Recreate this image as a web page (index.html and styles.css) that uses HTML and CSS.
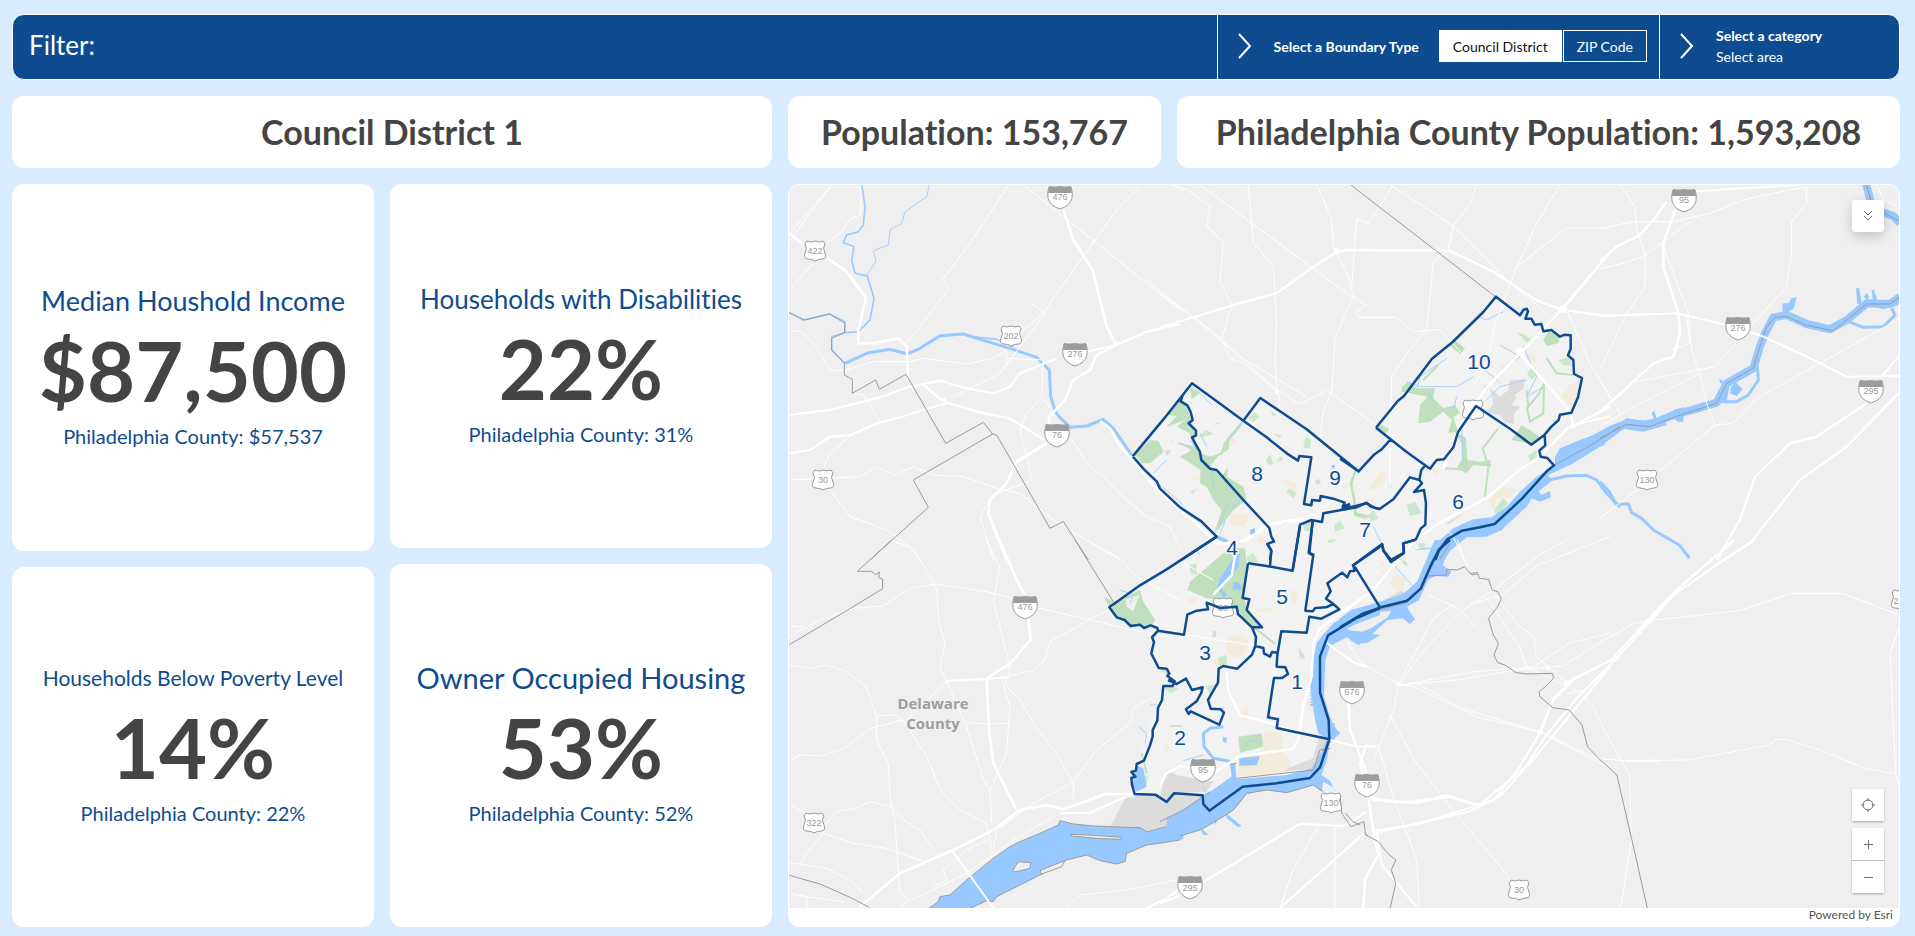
FILE: index.html
```html
<!DOCTYPE html>
<html lang="en">
<head>
<meta charset="utf-8">
<title>Philadelphia District Dashboard</title>
<link rel="stylesheet" href="styles.css">
</head>
<body>
<div class="dashboard">
  <header class="filter-bar">
    <h1 class="filter-title">Filter:</h1>
    <div class="selector selector-boundary">
      <button class="chevron" type="button" aria-label="Expand boundary type"><svg viewBox="0 0 14 26"><path d="M1 1 12 13 1 25"/></svg></button>
      <span class="selector-label" id="boundary-label">Select a Boundary Type</span>
      <div class="segmented" role="group" aria-labelledby="boundary-label">
        <button class="segment segment-active" type="button" aria-pressed="true">Council District</button>
        <button class="segment" type="button" aria-pressed="false">ZIP Code</button>
      </div>
    </div>
    <div class="selector selector-category">
      <button class="chevron" type="button" aria-label="Expand category"><svg viewBox="0 0 14 26"><path d="M1 1 12 13 1 25"/></svg></button>
      <button class="category" type="button"><span class="category-name">Select a category</span><span>Select area</span></button>
    </div>
  </header>

  <main class="content">
    <section class="left">
      <h2 class="card headline">Council District 1</h2>
      <div class="metrics">
        <div class="metric-column">
          <article class="card metric metric-tall">
            <h3 class="metric-title title-medium">Median Houshold Income</h3>
            <p class="metric-value">$87,500</p>
            <p class="metric-note">Philadelphia County: $57,537</p>
          </article>
          <article class="card metric metric-raised">
            <h3 class="metric-title title-small">Households Below Poverty Level</h3>
            <p class="metric-value">14%</p>
            <p class="metric-note">Philadelphia County: 22%</p>
          </article>
        </div>
        <div class="metric-column">
          <article class="card metric">
            <h3 class="metric-title title-regular">Households with Disabilities</h3>
            <p class="metric-value">22%</p>
            <p class="metric-note">Philadelphia County: 31%</p>
          </article>
          <article class="card metric">
            <h3 class="metric-title title-large">Owner Occupied Housing</h3>
            <p class="metric-value">53%</p>
            <p class="metric-note">Philadelphia County: 52%</p>
          </article>
        </div>
      </div>
    </section>

    <section class="right">
      <div class="populations">
        <h2 class="card headline">Population: 153,767</h2>
        <h2 class="card headline">Philadelphia County Population: 1,593,208</h2>
      </div>
      <div class="card map-card">
        <div class="map">
          <svg class="map-canvas" viewBox="789 185 1110 723" preserveAspectRatio="xMidYMid slice" role="img" aria-label="Map of Philadelphia council districts">
            <defs>
              <g id="interstate">
                <path class="shield" d="M-11-10Q-13-5-12 1Q-10 9 0 12Q10 9 12 1Q13-5 11-10Q5-9 0-10Q-5-9-11-10Z"/>
                <path class="shield-cap" d="M-11-11Q-5-10 0-11Q5-10 11-11L12-4H-12Z"/>
              </g>
              <path id="ushwy" class="shield" d="M-8-10Q-4-8 0-10Q4-8 8-10L10-7Q7-3 10 2Q12 8 7 8Q3 8 0 10Q-3 8-7 8Q-12 8-10 2Q-7-3-10-7Z"/>
            </defs>
            <rect class="land" x="789" y="185" width="1110" height="723"/>

            <!-- City interior -->
            <g transform="translate(1100 280) scale(.33333)">
              <path class="city" d="M98 529 276 310 430 422 481 354 778 576 870 480 828 443 894 362 1188 50 1260 106 1330 154 1412 164 1422 282 1446 294 1414 398 1334 464 1362 556 1184 732 1042 778 960 900 840 984 700 1050 660 1130 660 1240 688 1378 640 1494 430 1520 328 1592 310 1546 104 1542 94 1490 190 1218 154 1120 174 1052 28 982 350 770Z"/>
            </g>

            <!-- Industrial and airport areas -->
            <g transform="translate(1340 280) scale(.33333)">
              <path class="gray" d="M450 325 480 350 505 330 510 300 555 298 550 325 525 345 530 355 512 375 540 380 522 400 522 432 495 428 480 405 440 400 460 370Z"/>
              <path class="beige" d="M665 350 690 315 720 298 712 345 695 378ZM445 660 490 620 530 630 510 650 470 655 460 690ZM85 625 120 575 140 580 125 610 100 630ZM560 215 590 230 585 250 562 238ZM480 250 498 255 488 268ZM80 665 95 650 108 668ZM270 560 300 575 285 585ZM5 620 25 612 18 628Z"/>
            </g>
            <g transform="translate(1100 520) scale(.33333)">
              <path class="gray" d="M200 750 230 765 340 785 320 815 230 820 200 846 180 830ZM40 905 110 825 165 826 200 846 225 822 308 828 300 850 190 895 90 920 35 920ZM550 750 640 715 660 640 690 655 640 745 550 755ZM210 615H246V622H210Z"/>
              <path class="beige" d="M378 355 420 343 445 360 435 400 410 415 380 400ZM415 715 480 700 495 632 548 640 545 690 575 730 550 760 415 770ZM570 210 590 215 592 250 572 250ZM470 268 515 262 515 272 475 278ZM620 535 645 545 640 585 622 565ZM425 565 445 560 442 600 425 595ZM192 670 206 672 204 700 194 690ZM340 420 380 415 380 435 350 440ZM265 235H285V248H265ZM385 0 448-10 430 20 400 15ZM470 55 490 50 495 70 478 70Z"/>
            </g>
            <g transform="translate(1340 540) scale(.36671 .33333)">
              <path class="beige" d="M135 130 155 98 178 115 172 152 150 150ZM108 60 128 72 115 80ZM110 88 126 98 120 106Z"/>
              <path class="gray" d="M120 180 165 152 180 160 150 185Z"/>
            </g>
            <g transform="translate(780 540) scale(.33333)">
              <path class="gray" d="M990 862 1035 775 1120 768 1160 788 1200 765V850L1100 872Z"/>
            </g>

            <!-- Parks -->
            <g transform="translate(1100 280) scale(.33333)">
              <path class="park" d="M205 405 240 360 258 378 275 420 275 445 288 460 282 490 300 520 330 530 360 520 330 560 355 572 365 590 385 560 380 590 430 620 440 660 400 690 370 730 350 750 340 770 365 690 340 660 320 620 300 610 302 570 280 555 240 530 275 510 230 485 280 500 270 460 230 440 255 420 200 440 230 408ZM105 525 150 480 175 482 190 515 150 550 125 550ZM270 320 300 340 275 358ZM365 520 372 490 395 460 420 430 430 430 390 480 385 510Z"/>
              <path class="park-light" d="M290 470 320 450 340 462 310 472ZM192 512 215 510 202 528ZM445 415 462 396 478 410 462 426ZM510 395 530 402 520 410ZM520 460 548 468 535 474ZM610 490 620 470 634 480 630 505 612 505ZM498 540 510 522 520 552 505 555ZM528 545 545 528 548 542ZM558 635 575 620 590 640 580 655ZM610 725 638 725 632 755 612 752ZM270 636 292 625 278 642ZM702 735 720 722 735 745 705 755ZM680 780 710 778 690 790Z"/>
              <path class="park-line" d="M770 560 755 610 762 650 768 700 810 710M330 535 365 520 375 490 425 430"/>
              <path class="beige" d="M250 345 270 335 265 350ZM258 362 285 366 275 374ZM208 470 225 485 215 490ZM385 480 398 466 408 485 392 498ZM275 590 300 592 285 604ZM542 600 560 598 590 610 590 640 560 618ZM395 700 445 702 430 730 390 720ZM750 625 772 612 765 636Z"/>
              <path class="gray" d="M645 600 660 598 662 612 648 614Z"/>
            </g>
            <g transform="translate(1340 280) scale(.33333)">
              <path class="park" d="M185 320 205 305 230 325 285 325 280 355 310 385 345 375 360 400 340 410 355 460 378 475 382 540 420 545 450 540 455 560 400 555 380 580 350 565 365 540 365 490 345 455 325 460 335 420 310 395 270 425 235 430 240 375 262 350 210 340 185 335ZM610 180 625 155 660 165 655 190 620 198ZM110 443 118 432 148 448 135 462ZM325 195 340 178 375 205 362 222ZM515 480 545 435 600 470 575 492Z"/>
              <path class="park-light" d="M530 155 555 165 575 180 560 188ZM560 280 580 258 590 285 575 300ZM655 240 690 230 695 258 668 255ZM565 525 590 510 590 530 570 545ZM462 690 490 655 505 670 470 705ZM200 675 225 665 245 700 210 708ZM85 705 100 690 115 715 95 725ZM235 790 258 790 250 805ZM320 728 370 700 365 706 322 735ZM430 320 450 310 440 328ZM145 610 158 618 148 630Z"/>
              <path class="park-line" d="M250 300 295 255M560 330 565 380 598 340 612 310 610 400 570 425 560 380M435 650 445 560 428 505 475 445M310 565 365 568M50 560 32 610 42 660 45 705 80 715M620 235 650 280 700 285"/>
              <path class="stream" d="M230 330 240 290 320 235M200 305 240 320 350 320 400 290M340 180 370 210M480 195 540 230 500 260M550 200 590 290 560 350 612 320M415 110 440 120 490 95M440 360 480 320 560 300M350 350 340 390M270 340 275 370M430 270 460 290 480 310M365 440 370 550M100 740 125 790M240 805 275 805"/>
            </g>
            <g transform="translate(1100 520) scale(.33333)">
              <path class="park" d="M262 210 270 185 370 100 400 85 435 85 440 130 428 220 440 260 456 290 486 320 456 322 412 270 350 240 320 235ZM12 230 30 240 40 245 120 210 130 245 165 300 155 318 92 318 50 292 28 262ZM415 650 485 640 490 680 420 698Z"/>
              <path class="park-light" d="M440 110 460 100 475 125 445 130ZM190 500 218 495 235 508 210 520ZM338 332H348V352H338ZM354 412 380 405 380 432 358 440ZM318 500 350 492 330 525ZM175 445 210 455 200 465ZM595 380 600 415 618 415M268 135 290 130 290 165 272 160ZM130 770 145 765 138 800ZM605 12 640 6 632 34Z"/>
              <path class="park-line" d="M460 320 525 372M125 700 140 760"/>
              <path class="land-fill" d="M75 238 118 225 100 275 80 260Z"/>
              <path class="water" d="M395 120 420 98 415 140 385 180 362 205 382 225 370 232 352 205 355 185ZM400 185 420 190 425 210 398 208ZM370 650 382 655 378 670 368 662ZM418 715 480 708 470 735 418 738ZM108 735 130 745 140 800 110 815 98 795ZM450 30 465 25 462 42 450 42ZM350 45 385 60 378 72 348 55Z"/>
              <path class="water-line" d="M370 620 330 625 310 640 312 680 340 715 395 725"/>
              <path class="stream" d="M250 722 310 705M60 210 100 225 90 250M115 620 140 640 135 670M150 555H175M365 560 372 570M310 800 320 830M290 90 300 105M360 40 375 5M430 690 450 660 480 670"/>
            </g>
            <g transform="translate(1340 540) scale(.36671 .33333)">
              <path class="park-light" d="M212 12 228 8 232 22 215 24ZM168 58 182 66 184 80 172 72Z"/>
              <path class="stream" d="M135 60 200 140M205 30 250 25"/>
            </g>
            <g transform="translate(1100 280) scale(.33333)">
              <path class="stream" d="M275 315 335 375M330 575 345 630 385 670 355 750M430 420 380 490M175 610 250 675M160 580 200 540M270 480 310 530M235 490 275 500M300 460 320 500M355 430H350M395 690 440 640"/>
              <path class="water" d="M450 752 462 745 466 760 455 768ZM695 555H705V565H695Z"/>
            </g>

            <!-- Rivers -->
            <g transform="translate(1340 280) scale(.33333)">
              <path class="water" d="M840 425 800 442 760 465 720 480 660 505 645 530 645 555 590 590 540 635 500 680 455 712 400 718 340 745 300 780 265 840H312L330 812 380 772 440 770 485 750 500 735 560 680 575 655 600 665 632 652 630 632 605 645 595 635 635 602 625 585 700 550 780 500 840 455Z"/>
              <path class="creek" d="M610 604 680 588 740 586 770 600 800 640 840 682"/>
            </g>
            <g transform="translate(1600 180) scale(.33333)">
              <path class="river" d="M0 770 80 730 150 735 220 705 270 692 350 668 380 610 460 565 480 500 495 460 520 412 560 405 620 432 690 448 740 420 800 370 870 372 900 350"/>
              <path class="water" d="M548 395V370H565L575 355 590 352 582 385 560 398ZM392 625 405 605 428 628 410 648 390 640ZM220 690 250 682 250 725H235L220 715ZM155 700 163 692 170 715H160ZM357 600 365 598 375 620 365 615ZM0 770 80 715 130 722 190 710 200 735 130 755 60 745 15 770V795L0 800ZM355 670 365 620 380 605 390 615 380 660 400 665ZM768 325 778 325 785 372 772 372ZM792 350 800 340 808 350 800 362ZM815 330H822L832 360 870 360 895 345V375L850 388 820 380Z"/>
              <path class="creek" d="M372 665 410 665 445 645 475 600 472 560M745 425 790 442 850 440 885 405 875 385M0 905 28 935 48 972 85 972 95 998 125 1015 160 1050 238 1095 268 1134"/>
              <path class="river" d="M798 10 812 65M850 98 880 108 900 130"/>
              <path class="county" d="M0 775 80 733 150 740 220 712 350 670 380 610 460 565 480 500 500 440 525 412 560 410 620 436 700 452 800 372 870 372 900 350M800 15 812 60M850 98 900 125"/>
            </g>
            <g transform="translate(1340 540) scale(.36671 .33333)">
              <path class="water" d="M258 0 235 60 210 125 175 160 110 185 30 210 0 235V285L25 290 30 302 50 315 80 298 90 280 130 240 170 235 190 252 205 238 190 215 183 200 215 180 240 120 260 108 295 110 304 95 280 75 285 60 316 0Z"/>
              <path class="land-fill" d="M15 270 60 240 110 215 140 212 130 232 85 265 60 275Z"/>
            </g>
            <g transform="translate(780 540) scale(.33333)">
              <path class="water" d="M440 1110 475 1085 480 1070 510 1065 560 1020 640 955 690 920 720 905 780 880 835 855 840 842 880 852 940 858 1040 862 1080 863 1100 875 1160 860 1210 832V898L1150 908 1100 915 1040 940 1035 965 1010 972 960 962 920 945 860 960 790 1000 710 1040 650 1070 640 1085 620 1082 560 1110Z"/>
              <path class="coast-line" d="M440 1110 475 1085 480 1070 510 1065 560 1020 640 955 690 920 720 905 780 880 835 855 840 842 880 852 940 858 1040 862 1080 863 1100 875 1160 860 1200 838M1200 900 1150 908 1100 915 1040 940 1035 965 1010 972 960 962 920 945 860 960 790 1000 710 1040 650 1070 640 1085 620 1082 560 1110"/>
              <path class="land-fill coast" d="M698 992 715 965 752 968 750 985 705 996ZM872 883 940 886 1025 892V898L950 895 875 888ZM780 992 820 975 855 962 845 980 785 1002Z"/>
            </g>
            <g transform="translate(1100 520) scale(.33333)">
              <path class="water" d="M840 245 770 268 700 310 668 345 650 370 640 420 632 500 645 600 655 640 680 655 668 690 635 745 560 765 410 778 405 730 390 730 395 770 330 815 250 870 200 895V965L250 945 300 930 345 905 380 885 410 860 440 822 500 810 560 818 640 795 665 815 670 785 700 802 690 782 665 765 680 720 690 670 720 640 700 615 690 590 672 530 676 420 690 378 740 352 770 370 800 370 840 345 760 335 735 325 840 285Z"/>
              <path class="water" d="M340 890 355 895 345 915ZM378 880 425 918 415 922 380 895ZM295 915 325 945 310 945Z"/>
              <path class="pier" d="M638 400V440M636 470V560M700 610V650"/>
              <path class="coast-line" d="M390 735 410 730M410 775 640 750 660 690 690 685M240 948 300 930 345 905 400 870 440 820 500 810 560 818 640 795 670 815M180 905 250 870 330 815"/>
            </g>
            <g transform="translate(780 180) scale(.33333)">
              <path class="schuylkill" d="M195 550 260 520 330 508 382 522 420 505 480 467 550 462 640 490 700 508 770 532 808 570 812 650 828 700 870 742 920 738 970 718 1000 745 1055 825"/>
              <path class="brook" d="M245 12 255 80 250 135 235 155 200 165 190 188 222 200 215 240 225 280 262 288 282 355 270 420 235 455 195 458 155 470 155 510 195 550M28 398 70 420 148 402 195 425 195 458"/>
              <path class="stream" d="M448 15 440 50 375 95 365 130 330 150 325 195 280 212 288 245 260 285"/>
              <path class="brook" d="M580 470 650 478 700 500"/>
            </g>

            <!-- Local roads -->
            <g class="roads" transform="translate(780 180) scale(.33333)">
              <path d="M155 15 28 160M0 220 155 15M242 15 242 105 210 118 180 160 140 190M28 330 100 250M685 15 610 130 570 190 488 298 508 325 380 490M730 15 945 185 1200 390M1080 20 1010 90 910 230 830 340 790 400 730 450M755 372 795 400 660 580 520 650M28 452 65 455 110 500 150 572 200 570 280 545 390 545 430 535 560 552 640 535 680 510 680 550 660 580M680 535 790 540 785 650 740 700 720 750 745 850 755 900 640 945M790 655 830 710M870 770 920 850 970 890 1040 960 1100 1010 1170 1040 1200 1100M28 900 240 890 290 862 345 885 400 860 460 885 550 890 650 925 720 940 820 1020 1020 1140M130 865 150 820 210 768 300 730M150 930 210 1010 320 1050 390 1100 420 1140M220 640 250 645 300 725M645 935 600 1010 640 1140"/>
              <path class="road-mid" d="M28 705 150 690 290 655 390 620 480 602 560 625 640 640 690 620 720 580 830 535M28 820 90 810 150 770 210 765 290 730 350 715 430 690 500 670M425 610 490 665 610 700 690 715 790 778"/>
              <path class="road-major" d="M28 160 72 195M142 235 200 275 258 355 235 450 235 490 280 490 355 475 380 500 385 600M850 90 880 180 938 270 980 440 1010 495M1010 495 950 525 930 570 880 600 855 660 808 710 805 740M800 790 710 845 680 910 630 960 625 1000 680 1140"/>
              <path class="road-mid" d="M920 515 1010 495 1100 455 1200 432"/>
            </g>
            <g class="roads" transform="translate(780 540) scale(.33333)">
              <path d="M330 0 400 25 435 85 470 150 475 240 495 310 480 385 500 425 380 540M28 290 110 245 220 205 310 198 390 145 465 132 620 155 700 175M28 260H70M28 375 90 385 140 375 200 395 260 440 290 530 290 600 325 670 330 770 345 850 360 1060 390 1082M28 662 60 645 120 648 190 628 270 565 370 540 440 650 480 750 540 810 620 850 635 930M290 528 350 525 370 545M500 425 560 560 610 720 630 750 635 850M620 0 660 85 640 180 685 360 690 400 672 440 690 500 680 640 630 750M680 440 720 480 770 565 830 640 880 730 880 780M1130 465 1060 505 1050 550 950 630 880 725 760 790 650 870 640 930M780 205 1080 275 1200 295M1000 200 810 305 795 360 760 390 680 410M560 548 620 552 690 550M28 795 80 820 130 880 220 910 320 925 440 968M130 880 80 940 60 975M130 860 170 815 230 805 268 785 330 798 370 840 420 870 460 930M28 968 140 985 210 1020 250 1060M28 1060 80 1070 190 1085M80 1070V1104M360 1100 390 1080 470 1045 560 1000 640 945 700 900 820 830M460 1040 500 1020 490 990 560 930 620 900M920 0 1020 55 1070 110 1200 180M860 1104 900 1065 1050 1048 1190 1020"/>
              <path class="road-mid" d="M500 422 610 418 680 412M840 820 930 818 1040 770M1100 1104 1160 1075 1200 1045M515 930 640 1104"/>
              <path class="road-major" d="M658 0 710 120 735 165M745 235 752 300 690 370 620 415 628 580 640 670 680 750 710 810M240 1100 360 1000 520 930 640 870 720 810 800 795 850 808 975 762 1060 762"/>
            </g>
            <g class="roads" transform="translate(1160 180) scale(.33333 .48214)">
              <path d="M35 10 80 20 150 55 140 95 190 130 180 210 215 260 185 330 210 370 250 380 355 440 360 480M120 10 560 235 620 260 585 275 600 285 710 285 760 315M265 10 280 130 340 180 350 300 345 370 350 440M470 10 515 80 520 140 560 190 580 240 525 330 515 440 490 480 480 530M0 235 150 310 340 430 420 465 500 435 560 465 650 510M700 10 625 90 590 80 575 220M690 10 880 95 1060 220 1150 270M950 10 930 50 880 95 865 145 820 170 800 310 740 360 695 410 690 540 690 640M1200 10 1130 90 1070 180 1000 310 985 370 940 430M1350 100 1220 100 1070 180M760 315 840 310 1000 430M1220 270 1290 380 1350 450M330 740 380 715 440 705M1350 740 1130 800 1030 860 930 880M1350 940 1230 960 1120 1010 940 1020 720 1048 760 1050 880 1090 1140 1145 1350 1220M560 955 600 1000 715 1045 820 910 880 880M715 1048 700 1100 660 1170 640 1200M690 1110 760 1200 870 1300 980 1390 1075 1470M655 1175 700 1280 770 1410 778 1510M0 935 280 965M160 830 60 790M525 1340V1510M475 1340 400 1430 360 1510M950 930 900 890 800 860M985 870 1080 970 1100 1010 1220 1050M810 690 880 740 920 800 940 830"/>
              <path class="road-mid" d="M0 305 100 285 240 255 350 235 460 180 530 150 560 145 870 147 1000 190 1130 250 1210 270 1350 282M500 960 580 1000 620 1010M200 1020 205 1060 240 1110 350 1130 500 1160 590 1175 650 1175M0 1500 40 1490 120 1460 290 1390 420 1335 550 1340 620 1310M640 1350 780 1335 960 1295 1110 1210 1350 1010M360 1510 620 1350M1350 490 1230 510 1130 580 1080 600 980 660 840 710 760 750M650 1350 665 1420 770 1508"/>
              <path class="road-major" d="M1350 150 1210 265 1080 360 980 430 900 510 850 600M1080 360 1230 480 1240 510M1350 470 1240 510M620 1170 600 1210 625 1280 640 1350 655 1400 615 1450 610 1510M565 1085 570 1140 620 1230M635 1285 740 1290 870 1280 960 1297M760 750 640 850 480 930 460 960 455 1030 430 1090 415 1160 400 1180 240 1195 160 1230 60 1215 20 1230 0 1255M225 780 215 820 160 860"/>
            </g>
            <g class="roads" transform="translate(1100 280) scale(.33333)">
              <path class="road-major" d="M0 424 30 445 60 500 95 535 150 605 200 655 300 740 350 790 400 790 440 780 500 735 560 722 610 720"/>
              <path d="M430 775 560 725 660 700 700 660M140 0 300 130 420 230 620 350"/>
            </g>
            <g class="roads" transform="translate(1600 180) scale(.33333)">
              <path d="M60 15 105 80 110 150 135 220 135 320 75 410 0 570M0 145 100 125 220 125 330 100 430 60 520 40 620 20 620 70 575 125 575 220 560 320 460 430 345 560 110 605 50 650M0 265 70 250 130 230 270 125M190 200 265 400 275 510 300 580 320 670 345 735 400 730 470 655 660 550 900 415M0 600 60 700M0 740 100 680 300 580M345 735 130 915 0 1015M240 400 260 410 270 490 215 510M830 15 850 60 900 80"/>
              <path class="road-mid" d="M270 35 430 25 600 15M0 408 230 400 400 440 490 470 620 530 740 590 900 588M350 1140 420 1020 465 890 570 790 650 770 800 670M370 1140 450 1090 600 900 740 800 900 635M840 595 900 525"/>
              <path class="road-major" d="M0 245 50 200 120 165 160 120 200 65M225 90 190 190 190 260 235 400 240 460 220 530 160 550 40 660 0 695"/>
            </g>
            <g class="roads" transform="translate(1340 540) scale(.36671 .33333)">
              <path d="M320 0 340 60 410 145 440 190 490 260 530 290 535 350 620 430 690 500 720 570 790 705 795 900 765 1104M620 0 550 40 430 140 330 215 230 330 160 435 320 420 480 390 610 378 690 320 800 250 860 240 1090 212 1230 160 1370 160 1525 225M1525 260 1500 340 1515 700 1525 740M210 430 370 530 545 575 700 655 780 662 950 660 1170 615 1190 598 1220 600 1310 630 1430 685 1515 702M620 460 670 450"/>
              <path class="road-mid" d="M1130 0 1020 80 910 165 850 240 750 360 650 470 560 590 500 690 440 765 390 795 350 815 90 880M780 662H870M545 580 490 680 420 780 370 795 290 765 210 790 130 785 80 770"/>
              <path class="road-major" d="M1075 0 960 110 900 170 840 240 740 360 640 415 580 480 545 580"/>
            </g>
            <g class="interchanges">
              <circle cx="1116" cy="344" r="3"/><circle cx="944" cy="400" r="2"/><circle cx="1520" cy="352" r="4"/><circle cx="1563" cy="309" r="4"/><circle cx="1573" cy="426" r="3"/><circle cx="1567" cy="683" r="3"/><circle cx="1540" cy="732" r="3"/><circle cx="1398" cy="684" r="2"/><circle cx="1649" cy="621" r="3"/><circle cx="1548" cy="668" r="2"/><circle cx="1277" cy="392" r="2"/><circle cx="1336" cy="250" r="2"/>
            </g>

            <!-- County lines -->
            <g transform="translate(780 180) scale(.33333)">
              <path class="county" d="M28 398 75 420 148 402 195 430 193 458 155 475 155 510 193 550V585L217 598V640L287 600 298 628 378 583 497 790 610 727 638 762 400 900 445 982 270 1140M638 762 650 765 810 1045 850 1025 925 1140"/>
            </g>
            <g transform="translate(780 540) scale(.33333)">
              <path class="county" d="M335 0 232 94 275 94 287 104 298 96 296 112 308 118V146L200 212 28 314M885 0 1000 185M28 1006 120 1032 210 1072 268 1102"/>
            </g>
            <g transform="translate(1160 180) scale(.33333 .48214)">
              <path class="county" d="M572 10 1008 243"/>
            </g>
            <g transform="translate(1340 540) scale(.36671 .33333)">
              <path class="county" d="M240 108 290 105 292 88 320 90 340 80 355 100 375 98 380 115 405 118 415 150 430 155 440 175 430 200 405 235 418 285 432 310 420 345 430 368 450 375 480 398 510 402 580 400 582 415 560 440 543 455 545 470 580 503 625 510 660 555 675 620 705 655 755 705 795 895 838 1104M0 765 5 820 30 860 65 845 70 885 105 905 130 940 152 960 140 990 152 1030 137 1104M15 820 35 845 55 855M350 95 360 105 375 102M66 878 76 888"/>
              <path class="county" d="M0 262 60 225 111 208 183 187 222 148 250 80 275 28 300 0"/>
            </g>
            <g transform="translate(1340 280) scale(.33333)">
              <path class="county" d="M840 440 742 502 642 556M300 838 330 790"/>
            </g>

            <use href="#interstate" x="1060" y="197"/><text class="shield-text" x="1060" y="200">476</text>
            <use href="#interstate" x="1075" y="354"/><text class="shield-text" x="1075" y="357">276</text>
            <use href="#interstate" x="1057" y="435"/><text class="shield-text" x="1057" y="438">76</text>
            <use href="#interstate" x="1684" y="200"/><text class="shield-text" x="1684" y="203">95</text>
            <use href="#interstate" x="1738" y="328"/><text class="shield-text" x="1738" y="331">276</text>
            <use href="#interstate" x="1871" y="391"/><text class="shield-text" x="1871" y="394">295</text>
            <use href="#interstate" x="1025" y="607"/><text class="shield-text" x="1025" y="610">476</text>
            <use href="#interstate" x="1352" y="692"/><text class="shield-text" x="1352" y="695">676</text>
            <use href="#interstate" x="1203" y="770"/><text class="shield-text" x="1203" y="773">95</text>
            <use href="#interstate" x="1367" y="785"/><text class="shield-text" x="1367" y="788">76</text>
            <use href="#interstate" x="1190" y="887"/><text class="shield-text" x="1190" y="891">295</text>
            <use href="#ushwy" x="815" y="251"/><text class="shield-text" x="815" y="254">422</text>
            <use href="#ushwy" x="1011" y="336"/><text class="shield-text" x="1011" y="339">202</text>
            <use href="#ushwy" x="823" y="480"/><text class="shield-text" x="823" y="483">30</text>
            <use href="#ushwy" x="1647" y="480"/><text class="shield-text" x="1647" y="483">130</text>
            <use href="#ushwy" x="814" y="823"/><text class="shield-text" x="814" y="826">322</text>
            <use href="#ushwy" x="1331" y="803"/><text class="shield-text" x="1331" y="806">130</text>
            <use href="#ushwy" x="1519" y="890"/><text class="shield-text" x="1519" y="893">30</text>
            <use href="#ushwy" x="1902" y="600"/><text class="shield-text" x="1896" y="604">2</text>
            <use href="#ushwy" x="1473" y="410"/>
            <use href="#ushwy" x="1223" y="608"/><text class="shield-text" x="1223" y="611">30</text>
            <text class="county-name" x="933" y="709">Delaware</text>
            <text class="county-name" x="933" y="729">County</text>

            <!-- Council district boundaries -->
            <g class="districts" transform="translate(1100 280) scale(.33333)">
              <path d="M98 529 192 416 276 310 340 356 430 422 481 354 620 448 778 576M248 346 242 364 262 376 272 396 278 420 266 430 288 452 288 466 276 472 300 516 304 540 330 566 350 570 430 660 508 744 514 770 522 784 502 792 514 812 510 840M430 422 500 472 560 520 594 542 598 528 634 532 612 672 634 676 636 660 660 662 662 648 700 656 734 668 728 680 770 682 800 668 812 680 840 688M728 680 750 672M98 529 132 568 170 604 180 626 240 682 304 724 350 770 244 840M578 870 600 734 634 720 666 726 670 700 770 682M638 722 628 820 640 826"/>
            </g>
            <g class="districts" transform="translate(1340 280) scale(.33333)">
              <path d="M0 536 56 574 100 526 125 508 150 480M108 443 174 362 192 348 276 236 338 186 430 96 468 50 540 106 550 90 560 86 564 94 556 116 574 116 584 134 604 132 610 154 634 150 660 170 674 164 692 166 692 206 684 226 700 240 702 282 726 294 714 352 694 398 660 404 656 420 634 440 614 464 574 494 510 446 408 378 354 456 340 502 312 538 290 540 270 566 200 516 108 443M614 464 616 496 598 512 602 530 622 534 642 556 622 572 546 656 464 732 420 742 366 752 322 778 296 814 286 840M256 556 244 570 238 600 210 592 160 658 120 686 106 684 80 670 0 690M238 600 246 610 222 636 252 630 258 670 256 734 242 746 228 778 190 790 192 818 152 840M62 840 126 794 130 812 152 838"/>
            </g>
            <g class="districts" transform="translate(1100 520) scale(.33333)">
              <path d="M502 72 514 92 510 138M350 50 200 148 120 196 28 262 50 292 74 300 92 318 120 314 132 324 152 316 172 324 174 332 252 344 262 284 290 272 324 268 320 248 360 264 410 260 414 282 456 322 468 352 466 378 456 404 412 446 370 438 356 446 354 488 324 540 332 566 362 568 372 578 358 614 272 574 266 582 258 568 290 544 304 518 308 502 276 510 258 476 230 492 204 480M174 332 156 352 162 366 154 400 176 444 200 446 208 460 202 468 224 484 218 498 190 498 186 540 174 564 172 602 158 630 158 650 150 676 132 722 110 732 108 752 94 756 106 770 94 774 96 794 104 822 166 824 200 846 222 820 308 826 310 852 328 872 428 800 530 790 630 774 660 742 688 658 686 600 660 518 660 410 684 346 770 294 840 264M688 658 530 624 534 598 504 592 522 474 546 474 564 462 556 442 530 440 532 404 544 334 620 338 628 290 664 296 718 268 700 252 678 262 646 264 638 274 616 272 640 104 626 98 638 4M444 130 500 138 578 152 600 20M444 130 428 234 448 238 440 270 486 322 456 322M466 378 490 384 492 400 510 410 516 396 532 398M700 252 678 236 692 214 682 190 726 158 742 172 750 154 764 152 760 136 840 80M764 140 840 262"/>
            </g>
            <g class="districts" transform="translate(1340 540) scale(.36671 .33333)">
              <path d="M0 262 60 222 111 202 183 182 220 146 246 80 270 28 300 0M33 78 115 12 119 32 139 66 174 40 172 10 205 0"/>
            </g>
            <g class="district-labels">
              <text x="1479" y="369">10</text><text x="1257" y="481">8</text><text x="1335" y="485">9</text><text x="1458" y="509">6</text><text x="1365" y="537">7</text><text x="1232" y="555">4</text><text x="1282" y="604">5</text><text x="1205" y="660">3</text><text x="1297" y="689">1</text><text x="1180" y="745">2</text>
            </g>
          </svg>
          <div class="map-top">
            <button class="tool tool-expand" type="button" aria-label="Expand map tools"><svg viewBox="0 0 16 16"><path d="M4 3l4 4 4-4M4 8l4 4 4-4"/></svg></button>
          </div>
          <div class="map-tools">
            <button class="tool" type="button" aria-label="Find my location"><svg viewBox="0 0 16 16"><circle cx="8" cy="8" r="5"/><path d="M8 1v3M8 12v3M1 8h3M12 8h3"/></svg></button>
            <div class="zoom-tools">
              <button class="tool" type="button" aria-label="Zoom in"><svg viewBox="0 0 16 16"><path d="M8.500 4v9M4 8.500h9"/></svg></button>
              <button class="tool" type="button" aria-label="Zoom out"><svg viewBox="0 0 16 16"><path d="M4 8.500h9"/></svg></button>
            </div>
          </div>
        </div>
        <footer class="attribution">Powered by Esri</footer>
      </div>
    </section>
  </main>
</div>
</body>
</html>
```
FILE: styles.css
```css
* { box-sizing: border-box; }
html, body { height: 100%; }
body {
  margin: 0;
  background: #d9ecff;
  color: #444;
  font-family: Lato, "Open Sans", sans-serif;
  font-variant-ligatures: none;
}
h1, h2, h3, p { margin: 0; font-weight: 400; }
button { font: inherit; font-variant-ligatures: none; color: inherit; border: 0; background: none; padding: 0; margin: 0; cursor: pointer; }

.dashboard {
  min-height: 100%;
  padding: 14px 15px 9px 12px;
  display: flex;
  flex-direction: column;
  gap: 16px;
}

.filter-bar {
  flex: none;
  height: 66px;
  display: flex;
  align-items: stretch;
  overflow: hidden;
  border: 1px solid #fff;
  border-radius: 12px;
  background: #0f4c8f;
  color: #fff;
}
.filter-title { flex: 1; padding: 14px 16px; font-size: 26px; line-height: 32px; }
.selector { display: flex; align-items: center; border-left: 1px solid #fff; }
.selector-boundary { padding: 0 12px 2px 20px; }
.selector-category { width: 240px; padding: 0 0 2px 20px; }
.chevron { display: flex; width: 14px; margin-right: 22px; }
.chevron svg { width: 14px; height: 26px; fill: none; stroke: #fff; stroke-width: 2; }
.selector-label { font-size: 14px; font-weight: 700; white-space: nowrap; }
.segmented { display: flex; gap: 1px; margin-left: 20px; }
.segment { height: 32px; padding: 0 13px; border: 1px solid #fff; font-size: 14px; white-space: nowrap; }
.segment-active { background: #fff; color: #111; }
.category { display: flex; flex-direction: column; text-align: left; font-size: 14px; line-height: 21px; }
.category-name { font-weight: 700; }

.content { flex: 1; display: grid; grid-template-columns: 760fr 1112fr; gap: 16px; }
.left, .right { display: flex; flex-direction: column; gap: 16px; min-width: 0; }
.card { background: #fff; border-radius: 12px; }
.headline {
  flex: none;
  height: 72px;
  display: flex;
  align-items: center;
  justify-content: center;
  font-size: 34px;
  line-height: 40px;
  font-weight: 700;
  white-space: nowrap;
}
.populations { display: grid; grid-template-columns: 373fr 723fr; gap: 16px; }

.metrics { flex: 1; display: grid; grid-template-columns: 362fr 382fr; gap: 16px; }
.metric-column { display: flex; flex-direction: column; gap: 16px; min-width: 0; }
.metric {
  flex: 363 1 0;
  display: flex;
  flex-direction: column;
  align-items: center;
  justify-content: center;
  padding-bottom: 2px;
  white-space: nowrap;
}
.metric-tall { flex-grow: 365; }
.metric-raised { flex-grow: 354; padding-bottom: 6px; }
.metric-title { color: #0f4c8f; line-height: 40px; }
.title-small { font-size: 21px; }
.title-regular { font-size: 26px; }
.title-medium { font-size: 27px; }
.title-large { font-size: 29px; }
.metric-value { font-size: 83px; line-height: 98px; font-weight: 700; }
.metric-note { color: #0f4c8f; font-size: 20px; line-height: 34px; }

.map-card { flex: 1; display: flex; flex-direction: column; padding: 1px; overflow: hidden; }
.map { position: relative; flex: 1; min-height: 0; overflow: hidden; border-radius: 11px 11px 0 0; }
.map-canvas { position: absolute; inset: 0; width: 100%; height: 100%; }
.attribution { height: 18px; padding-right: 6px; text-align: right; font-size: 12px; line-height: 14px; color: #555; }

.map-top { position: absolute; top: 15px; right: 15px; }
.map-tools { position: absolute; right: 15px; bottom: 15px; display: flex; flex-direction: column; gap: 7px; }
.tool {
  width: 32px;
  height: 32px;
  display: flex;
  align-items: center;
  justify-content: center;
  background: #fff;
  box-shadow: 0 1px 2px rgba(0, 0, 0, .3);
}
.tool svg { width: 16px; height: 16px; fill: none; stroke: #6e6e6e; stroke-width: 1; }
.tool-expand { border-radius: 3px; box-shadow: 0 4px 12px rgba(0, 0, 0, .2); }
.zoom-tools { display: flex; flex-direction: column; gap: 1px; }

.map-canvas path { vector-effect: non-scaling-stroke; }
.land, .land-fill { fill: #efefef; }
.city { fill: #f2f2f2; }
.water { fill: #97c8ff; }
.river, .schuylkill, .brook, .creek, .water-line, .stream, .pier { fill: none; stroke: #97c8ff; stroke-linejoin: round; }
.river { stroke-width: 8; }
.schuylkill { stroke-width: 3; }
.water-line { stroke-width: 3; }
.creek { stroke-width: 3; }
.brook { stroke-width: 1.5; }
.pier { stroke-width: 3; stroke-dasharray: 2 1; }
.stream { stroke-width: 1; stroke: #a9d1fb; }
.park { fill: #c0dfbc; }
.park-light { fill: #cde7cc; }
.park-line { fill: none; stroke: #c0dfbc; stroke-width: 2; }
.beige { fill: #f3ebdc; }
.gray { fill: #dcdcdc; }
.coast, .coast-line, .county { stroke: #9c9c9c; stroke-width: 1; }
.county, .coast-line { fill: none; }
.roads path { fill: none; stroke: #fff; stroke-width: 1; stroke-linejoin: round; }
.roads .road-mid { stroke-width: 2; }
.roads .road-major { stroke-width: 2.5; }
.interchanges { fill: #fff; }
.shield { fill: #fff; stroke: #9c9c9c; stroke-width: 1; }
.shield-cap { fill: #9c9c9c; }
.shield-text { font: 9px "Liberation Sans", Arial, sans-serif; fill: #999; text-anchor: middle; }
.county-name { font: 700 15px "Open Sans", sans-serif; fill: #9e9e9e; text-anchor: middle; }
.districts path { fill: none; stroke: #0f4c8f; stroke-width: 2.5; stroke-linejoin: round; }
.district-labels text {
  font: 21px "Liberation Sans", Arial, sans-serif;
  fill: #0f4c8f;
  stroke: #f4f6fb;
  stroke-width: 3;
  paint-order: stroke;
  text-anchor: middle;
}
```
